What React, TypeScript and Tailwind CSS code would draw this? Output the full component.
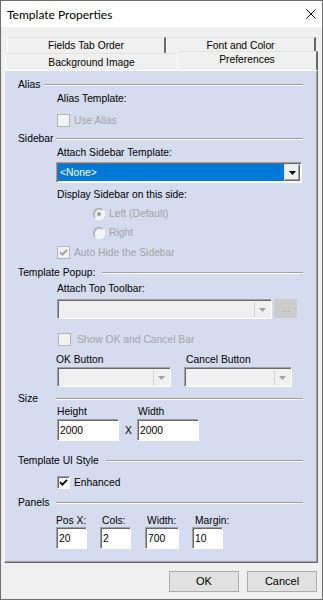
import * as React from "react";

const sunken =
  "border border-t-[#a0a0a0] border-l-[#a0a0a0] border-b-white border-r-white shadow-[inset_1px_1px_0_#696969]";
const raised =
  "border border-t-[#e3e3e3] border-l-[#e3e3e3] border-b-[#696969] border-r-[#696969] shadow-[inset_-1px_-1px_0_#a0a0a0]";

function Header({ label, labelClass }: { label: string; labelClass: string }) {
  return (
    <div className="flex items-center h-[13px] pl-[13px] pr-[14px]">
      <span className={`${labelClass} shrink-0 whitespace-nowrap`}>{label}</span>
      <div className="flex-1 h-[2px] border-t border-t-[#a0a0a0] border-b border-b-white" />
    </div>
  );
}

function Arrow({ color }: { color: string }) {
  return (
    <svg width="7" height="4" viewBox="0 0 7 4">
      <path d="M0 0H7L3.5 4Z" fill={color} />
    </svg>
  );
}

function Check({ color }: { color: string }) {
  return (
    <svg width="9" height="9" viewBox="0 0 9 9">
      <path d="M1 4.2L3.4 6.6L8 1.8" stroke={color} strokeWidth="1.8" fill="none" />
    </svg>
  );
}

function CheckBox({ checked, disabled }: { checked?: boolean; disabled?: boolean }) {
  if (disabled) {
    return (
      <div className="w-[13px] h-[13px] shrink-0 border border-[#b4b4b4] bg-[#f2f2f2] flex items-center justify-center">
        {checked && <Check color="#a0a0a0" />}
      </div>
    );
  }
  return (
    <div className={`w-[13px] h-[13px] shrink-0 bg-white flex items-center justify-center ${sunken}`}>
      {checked && <Check color="#000" />}
    </div>
  );
}

function Radio({ selected }: { selected?: boolean }) {
  return (
    <div className="w-[12px] h-[12px] shrink-0 rounded-full border border-[#a0a0a0] border-b-white border-r-white bg-[#f2f2f2] shadow-[inset_1px_1px_0_#c8c8c8] flex items-center justify-center">
      {selected && <div className="w-[4px] h-[4px] rounded-full bg-[#a0a0a0]" />}
    </div>
  );
}

function DisabledSelect({ width }: { width: string }) {
  return (
    <div className={`${width} h-[20px] bg-[#f0f0f0] ${sunken} flex justify-end p-[1px] pl-0 pt-[2px]`}>
      <div className="w-[16px] h-full bg-[#f0f0f0] border-l border-[#d4d4d4] flex items-center justify-center">
        <Arrow color="#a0a0a0" />
      </div>
    </div>
  );
}

function TextBox({ width, value }: { width: string; value: string }) {
  return (
    <div className={`${width} h-[22px] bg-white ${sunken} pl-[2px] pt-[4px]`}>{value}</div>
  );
}

export default function App() {
  return (
    <div className="w-[323px] h-[600px] flex flex-col bg-[#f0f0f0] border border-[#6e6e6e] font-['Liberation_Sans',Arial,sans-serif] text-[10.3px] leading-[13px] text-black overflow-hidden">
      {/* title bar */}
      <div className="h-[26px] shrink-0 bg-white flex items-center justify-between pl-[6px] pr-[6px]">
        <span className="font-['Lato',sans-serif] text-[12px]">Template Properties</span>
        <svg width="10" height="10" viewBox="0 0 10 10">
          <path d="M0.5 0.5L9.5 9.5M9.5 0.5L0.5 9.5" stroke="#000" strokeWidth="1" />
        </svg>
      </div>

      {/* tabs */}
      <div className="mt-[10px] flex pl-[6px]">
        <div className="w-[159px] h-[16px] border-t border-l border-t-[#e3e3e3] border-l-white border-r-2 border-r-[#696969] flex items-center justify-center">
          Fields Tab Order
        </div>
        <div className="w-[150px] h-[16px] border-t border-l border-t-[#e3e3e3] border-l-white border-r-2 border-r-[#696969] flex items-center justify-center">
          Font and Color
        </div>
      </div>
      <div className="-mt-[2px] h-[19px] flex items-end pl-[4px]">
        <div className="w-[172px] h-[17px] border-t border-l border-t-[#e3e3e3] border-l-white flex items-center justify-center">
          Background Image
        </div>
        <div className="w-[141px] h-[19px] border-t border-l border-t-[#e3e3e3] border-l-white border-r-2 border-r-[#696969] flex items-center justify-center pb-[3px] bg-[#f0f0f0]">
          Preferences
        </div>
      </div>

      {/* panel */}
      <div className="ml-[3px] w-[314px] h-[493px] shrink-0 bg-[#d5dcef] border border-t-white border-l-white border-r-[#696969] border-b-[#696969] shadow-[inset_-1px_-1px_0_#a0a0a0]">
        <div className="mt-[7px]">
          <Header label="Alias" labelClass="w-[26px]" />
        </div>
        <div className="mt-[1px] pl-[52px] h-[13px]">Alias Template:</div>
        <div className="mt-[9px] pl-[52px] h-[13px] flex items-center gap-[4px] text-[#a3a3a3]">
          <CheckBox disabled />
          <span>Use Alias</span>
        </div>

        <div className="mt-[5px]">
          <Header label="Sidebar" labelClass="w-[38px]" />
        </div>
        <div className="mt-[1px] pl-[52px] h-[13px]">Attach Sidebar Template:</div>
        <div className={`mt-[3px] ml-[51px] w-[246px] h-[21px] ${sunken} bg-white p-[1px] flex`}>
          <div className="flex-1 bg-[#0078d7] text-white pl-[2px] flex items-center">&lt;None&gt;</div>
          <div className={`w-[16px] ${raised} bg-[#f0f0f0] flex items-center justify-center`}>
            <Arrow color="#000" />
          </div>
        </div>
        <div className="mt-[5px] pl-[52px] h-[13px]">Display Sidebar on this side:</div>
        <div className="mt-[6px] pl-[88px] h-[13px] flex items-center gap-[4px] text-[#a3a3a3]">
          <Radio selected />
          <span>Left (Default)</span>
        </div>
        <div className="mt-[6px] pl-[88px] h-[13px] flex items-center gap-[4px] text-[#a3a3a3]">
          <Radio />
          <span>Right</span>
        </div>
        <div className="mt-[7px] pl-[52px] h-[13px] flex items-center gap-[4px] text-[#a3a3a3]">
          <CheckBox disabled checked />
          <span>Auto Hide the Sidebar</span>
        </div>

        <div className="mt-[7px]">
          <Header label="Template Popup:" labelClass="w-[84px]" />
        </div>
        <div className="mt-[3px] pl-[52px] h-[13px]">Attach Top Toolbar:</div>
        <div className="mt-[4px] pl-[52px] flex items-start gap-[2px]">
          <DisabledSelect width="w-[215px]" />
          <div className="w-[23px] h-[19px] bg-[#cccccc] text-[#a0a0a0] flex items-center justify-center">...</div>
        </div>
        <div className="mt-[14px] pl-[53px] h-[13px] flex items-center gap-[6px] text-[#a3a3a3]">
          <CheckBox disabled />
          <span>Show OK and Cancel Bar</span>
        </div>
        <div className="mt-[7px] pl-[51px] h-[13px] flex">
          <span className="w-[130px]">OK Button</span>
          <span>Cancel Button</span>
        </div>
        <div className="mt-[1px] pl-[52px] flex gap-[13px]">
          <DisabledSelect width="w-[114px]" />
          <DisabledSelect width="w-[108px]" />
        </div>

        <div className="mt-[5px]">
          <Header label="Size" labelClass="w-[38px]" />
        </div>
        <div className="pl-[52px] h-[13px] flex">
          <span className="w-[81px]">Height</span>
          <span>Width</span>
        </div>
        <div className="mt-[1px] pl-[52px] flex items-center">
          <TextBox width="w-[62px]" value="2000" />
          <span className="w-[18px] pl-[6px]">X</span>
          <TextBox width="w-[62px]" value="2000" />
        </div>

        <div className="mt-[13px]">
          <Header label="Template UI Style" labelClass="w-[88px]" />
        </div>
        <div className="mt-[9px] pl-[52px] h-[13px] flex items-center gap-[4px]">
          <CheckBox checked />
          <span>Enhanced</span>
        </div>

        <div className="mt-[7px]">
          <Header label="Panels" labelClass="w-[38px]" />
        </div>
        <div className="mt-[5px] pl-[51px] h-[13px] flex">
          <span className="w-[46px]">Pos X:</span>
          <span className="w-[45px]">Cols:</span>
          <span className="w-[48px]">Width:</span>
          <span>Margin:</span>
        </div>
        <div className="pl-[51px] flex">
          <div className="w-[44px]">
            <TextBox width="w-[31px]" value="20" />
          </div>
          <div className="w-[45px]">
            <TextBox width="w-[31px]" value="2" />
          </div>
          <div className="w-[47px]">
            <TextBox width="w-[34px]" value="700" />
          </div>
          <TextBox width="w-[31px]" value="10" />
        </div>
      </div>

      {/* buttons */}
      <div className="mt-[8px] flex justify-end gap-[8px] pr-[5px]">
        <button className="w-[70px] h-[21px] bg-[#e1e1e1] border border-[#adadad] text-[11px]">OK</button>
        <button className="w-[70px] h-[21px] bg-[#e1e1e1] border border-[#adadad] text-[11px]">Cancel</button>
      </div>
    </div>
  );
}
